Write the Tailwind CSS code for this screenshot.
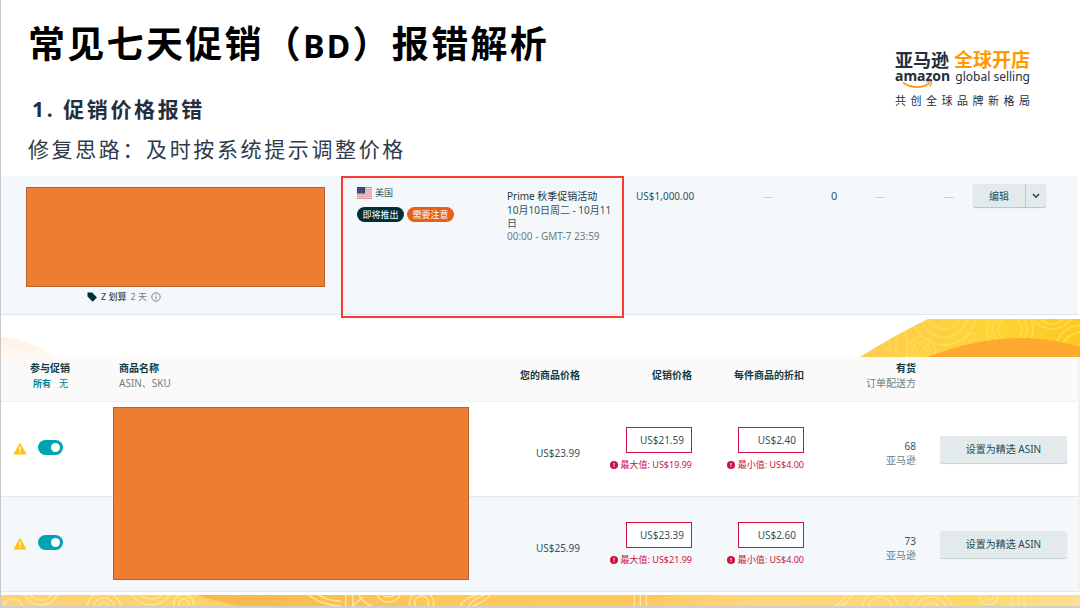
<!DOCTYPE html>
<html lang="zh-CN">
<head>
<meta charset="utf-8">
<meta name="viewport" content="width=device-width, initial-scale=1">
<title>常见七天促销（BD）报错解析</title>
<script src="https://cdn.jsdelivr.net/npm/@tailwindcss/browser@4"></script>
</head>
<body class="bg-white font-['Noto_Sans','Noto_Sans_CJK_SC',sans-serif] text-[10px] leading-[14px] text-[#33535a]">
<svg class="hidden" aria-hidden="true">
  <defs>
    <symbol id="warn" viewBox="0 0 14 13"><path d="M7 .5 13.6 12.5H.4Z" fill="#ffc20e"/><path d="M7 4.5v4M7 9.6v1.4" stroke="#fff" stroke-width="1.4"/></symbol>
    <symbol id="err" viewBox="0 0 8 8"><circle cx="4" cy="4" r="4" fill="#cc1140"/><path d="M4 1.8v2.7M4 5.2v1" stroke="#fff" stroke-width="1"/></symbol>
  </defs>
</svg>
<div class="min-h-screen flex flex-col border-l border-[#c8c8c8]">
  <header class="flex items-start justify-between h-[176px] pl-[27px] pr-[50px]">
    <div class="pt-[20px]">
      <h1 class="text-[37px] leading-[48px] font-bold text-black tracking-[0.0625em]">常见七天促销（<span class="text-[32px] leading-none">BD</span>）报错解析</h1>
      <h2 class="mt-[25px] pl-[4px] text-[21px] leading-[32px] font-bold text-[#232f3e] tracking-[0.125em]">1. 促销价格报错</h2>
      <p class="mt-[8px] text-[21px] leading-[32px] text-[#2f3b49] tracking-[0.125em]">修复思路：及时按系统提示调整价格</p>
    </div>
    <div class="pt-[50px] w-[135px] text-[#232f3e]">
      <div class="flex justify-between text-[18px] leading-[20px] font-bold"><span>亚马逊</span><span class="text-[19px] text-[#ff9900]">全球开店</span></div>
      <div class="-mt-[1px] relative flex justify-between items-baseline text-[12px] leading-[13px] whitespace-nowrap"><b class="text-[14px]">amazon</b><span>global selling</span>
        <svg class="absolute left-[7px] top-[11px]" width="32" height="9" viewBox="0 0 32 9" fill="none" stroke="#ff9900"><path d="M1 2.5C9 8.5 20 8.5 28 3" stroke-width="1.8"/><path d="M24.5 2.2c2-1 4-1 5-.4.3 1.400-.5 3.200-1.800 4.500" stroke-width="1.200"/></svg>
      </div>
      <div class="mt-[10px] flex justify-between text-[11px] leading-[16px]"><span>共</span><span>创</span><span>全</span><span>球</span><span>品</span><span>牌</span><span>新</span><span>格</span><span>局</span></div>
    </div>
  </header>

  <section class="flex items-start h-[139px] bg-[#f5f8fa] border-b border-[#dfe7e8] mr-[2px]">
    <div class="flex-1 pl-[25px] pr-[16px] pt-[11px]">
      <div class="h-[100px] bg-[#ed7d31] border border-[#b8622a]"></div>
      <div class="flex items-center gap-[4px] pl-[61px] pt-[3px] text-[9px]">
        <svg width="10" height="10" viewBox="0 0 10 10"><path d="M.8.5h4.400L9.500 4.900a.8.8 0 0 1 0 1.100L6.300 9.200a.8.8 0 0 1-1.100 0L.5 4.600V.8Z" fill="#002f36"/></svg>
        <span class="font-medium">Z 划算</span><span class="text-[#6c7f82]">2 天</span>
        <svg width="10" height="10" viewBox="0 0 10 10" fill="none" stroke="#6c7f82"><circle cx="5" cy="5" r="4.200" stroke-width=".9"/><path d="M5 4.300v3M5 2.500v1"/></svg>
      </div>
    </div>
    <div class="flex w-[283px] h-[142px] border-2 border-[#fa3a30] pl-[14px] pt-[8px]">
      <div class="w-[150px] text-[9px]">
        <div class="flex items-center gap-[3px]">
          <svg width="15" height="12" viewBox="0 0 15 12"><rect width="15" height="12" fill="#f4e4e6"/><path d="M0 .5h15M0 2.300h15M0 4.100h15M0 6h15M0 7.800h15M0 9.700h15M0 11.500h15" stroke="#d8848d" stroke-width=".9"/><rect width="8" height="6.400" fill="#34416f"/><path d="M1 1.500h6M1 3.200h6M1 4.900h6" stroke="#8089a8" stroke-width=".6" stroke-dasharray=".7 .8"/></svg>
          <span>美国</span>
        </div>
        <div class="flex gap-[3px] mt-[7px] text-white leading-[15px]">
          <span class="rounded-full bg-[#002f36] px-[5px] w-[47px] text-center">即将推出</span><span class="rounded-full bg-[#e8601c] px-[5px] w-[47px] text-center">需要注意</span>
        </div>
      </div>
      <div class="w-[108px] pt-[4px] leading-[13px]">
        <div class="text-[#1f3338]">Prime 秋季促销活动</div>
        <div class="mt-[1px]">10月10日周二 - 10月11日</div>
        <div class="text-[#6c7f82]">00:00 - GMT-7 23:59</div>
      </div>
    </div>
    <div class="w-[122px] pl-[12px] pt-[13px]">US$1,000.00</div>
    <div class="w-[59px] pt-[13px] pl-[17px] text-[#c3d0d2]">—</div>
    <div class="w-[53px] pt-[13px] pl-[26px] text-[11px]">0</div>
    <div class="w-[59px] pt-[13px] pl-[17px] text-[#c3d0d2]">—</div>
    <div class="w-[56px] pt-[13px] pl-[27px] text-[#c3d0d2]">—</div>
    <div class="w-[105px] pt-[8px] flex">
      <div class="flex h-[23px] rounded-[2px] bg-[#e3eaeb] shadow-[0_1px_1px_#b5c3c5]">
        <button class="w-[52px] text-center text-[#1f4a52]">编辑</button>
        <button class="w-[21px] border-l border-[#bccacc] flex items-center justify-center" aria-label="更多"><svg width="8" height="6" viewBox="0 0 8 6" fill="none" stroke="#1f4a52" stroke-width="1.500"><path d="M1 1l3 3.200L7 1"/></svg></button>
      </div>
    </div>
  </section>

  <div class="flex justify-between h-[42px]" aria-hidden="true">
    <svg width="60" height="42" viewBox="0 0 60 42"><defs><linearGradient id="pale" x1="0" y1="0" x2="0" y2="1"><stop offset="0" stop-color="#fff0e2"/><stop offset="1" stop-color="#fff9f3"/></linearGradient></defs><path d="M0 22Q26 24 54 42H0Z" fill="url(#pale)"/></svg>
    <svg width="220" height="42" viewBox="0 0 220 42">
      <defs><linearGradient id="sun" x1="0" x2="1"><stop offset="0" stop-color="#ffcb52"/><stop offset=".6" stop-color="#fdd436"/><stop offset="1" stop-color="#fdc91e"/></linearGradient><clipPath id="hill"><path d="M0 42Q35 20 68 4H220V42Z"/></clipPath></defs>
      <g clip-path="url(#hill)"><rect width="220" height="42" fill="url(#sun)"/>
        <g fill="none" stroke="#ffdc52" stroke-width="1.500"><circle cx="61" cy="36" r="14"/><circle cx="61" cy="36" r="9"/><circle cx="61" cy="36" r="5"/><circle cx="84" cy="-2" r="32"/><circle cx="84" cy="-2" r="24"/><circle cx="84" cy="-2" r="16"/><circle cx="150" cy="14" r="23"/><circle cx="150" cy="14" r="17"/><circle cx="150" cy="14" r="12"/><path d="M103 32c0-10 8-15 16-14M108 32c0-6 4-9 9-8M30 20v20M36 20v20M44 14q6 12 2 28"/><circle cx="222" cy="38" r="28"/><circle cx="222" cy="38" r="21"/><path d="M180 4q12 10 24 0M172 4q20 20 40 0"/></g>
        <path d="M68 42Q150 10 220 32V42Z" fill="#ffa930"/></g>
    </svg>
  </div>

  <div class="border-r-2 border-[#eef2f2]">
  <table class="w-full table-fixed border-collapse">
    <colgroup><col class="w-[112px]"><col><col class="w-[111px]"><col class="w-[112px]"><col class="w-[112px]"><col class="w-[112px]"><col class="w-[162px]"></colgroup>
    <thead>
      <tr class="h-[44px] bg-[#fafafa] border-b border-[#eef1f1] align-top leading-[15px] text-[#123c44]">
        <th class="pt-[4px] pl-[29px] text-left font-bold">参与促销<div class="flex gap-[8px] pl-[3px] text-[9px]"><a href="#" class="text-[#008296]">所有</a><a href="#" class="font-normal text-[#008296]">无</a></div></th>
        <th class="pt-[4px] pl-[6px] text-left font-bold">商品名称<div class="font-normal text-[#6c7f82]">ASIN、SKU</div></th>
        <th class="pt-[11px] text-right font-bold">您的商品价格</th>
        <th class="pt-[11px] text-right font-bold">促销价格</th>
        <th class="pt-[11px] text-right font-bold">每件商品的折扣</th>
        <th class="pt-[4px] text-right font-bold">有货<div class="font-normal text-[#6c7f82]">订单配送方</div></th>
        <td></td>
      </tr>
    </thead>
    <tbody>
      <tr class="h-[95px] bg-white border-b border-[#e3e9ea] align-top">
        <td class="pt-[38px] pl-[12px]"><div class="flex items-center gap-[11px]"><svg class="mt-[2px]" width="14" height="13"><use href="#warn"/></svg><input type="checkbox" role="switch" checked aria-label="参与促销" class="relative appearance-none w-[25px] h-[15px] rounded-full bg-[#00a3b4] before:content-[''] before:absolute before:right-[3px] before:top-[3px] before:size-[9px] before:rounded-full before:bg-white"></div></td>
        <td class="relative"><div class="absolute inset-x-0 top-[5px] h-[173px] bg-[#ed7d31] border border-[#b8622a]"></div></td>
        <td class="pt-[44px] text-right">US$23.99</td>
        <td class="pt-[25px]"><div class="flex flex-col items-end"><input aria-label="促销价格" value="US$21.59" class="w-[66px] h-[26px] bg-white border border-[#cc1140] pr-[7px] text-right"><div class="mt-[5px] flex items-center gap-[3px] text-[9px] text-[#cc1140] whitespace-nowrap"><svg width="8" height="8"><use href="#err"/></svg>最大值: US$19.99</div></div></td>
        <td class="pt-[25px]"><div class="flex flex-col items-end"><input aria-label="每件商品的折扣" value="US$2.40" class="w-[66px] h-[26px] bg-white border border-[#cc1140] pr-[7px] text-right"><div class="mt-[5px] flex items-center gap-[3px] text-[9px] text-[#cc1140] whitespace-nowrap"><svg width="8" height="8"><use href="#err"/></svg>最小值: US$4.00</div></div></td>
        <td class="pt-[37px] text-right">68<div class="text-[#6c7f82]">亚马逊</div></td>
        <td class="pt-[34px] pl-[24px] pr-[11px]"><button class="w-full h-[27px] rounded-[2px] bg-[#e3eaeb] text-[#1f4a52] shadow-[0_1px_1px_#c5d0d2]">设置为精选 ASIN</button></td>
      </tr>
      <tr class="h-[95px] bg-[#f5f8fa] border-b border-[#e3e9ea] align-top">
        <td class="pt-[38px] pl-[12px]"><div class="flex items-center gap-[11px]"><svg class="mt-[2px]" width="14" height="13"><use href="#warn"/></svg><input type="checkbox" role="switch" checked aria-label="参与促销" class="relative appearance-none w-[25px] h-[15px] rounded-full bg-[#00a3b4] before:content-[''] before:absolute before:right-[3px] before:top-[3px] before:size-[9px] before:rounded-full before:bg-white"></div></td>
        <td></td>
        <td class="pt-[44px] text-right">US$25.99</td>
        <td class="pt-[25px]"><div class="flex flex-col items-end"><input aria-label="促销价格" value="US$23.39" class="w-[66px] h-[26px] bg-white border border-[#cc1140] pr-[7px] text-right"><div class="mt-[5px] flex items-center gap-[3px] text-[9px] text-[#cc1140] whitespace-nowrap"><svg width="8" height="8"><use href="#err"/></svg>最大值: US$21.99</div></div></td>
        <td class="pt-[25px]"><div class="flex flex-col items-end"><input aria-label="每件商品的折扣" value="US$2.60" class="w-[66px] h-[26px] bg-white border border-[#cc1140] pr-[7px] text-right"><div class="mt-[5px] flex items-center gap-[3px] text-[9px] text-[#cc1140] whitespace-nowrap"><svg width="8" height="8"><use href="#err"/></svg>最小值: US$4.00</div></div></td>
        <td class="pt-[37px] text-right">73<div class="text-[#6c7f82]">亚马逊</div></td>
        <td class="pt-[34px] pl-[24px] pr-[11px]"><button class="w-full h-[27px] rounded-[2px] bg-[#e3eaeb] text-[#1f4a52] shadow-[0_1px_1px_#c5d0d2]">设置为精选 ASIN</button></td>
      </tr>
    </tbody>
  </table>
  </div>

  <div class="mt-[3px] h-[13px] border-b-2 border-[#cfcfcf]" aria-hidden="true">
    <svg class="block w-full h-[11px]" viewBox="0 0 1080 11" preserveAspectRatio="none">
      <defs><linearGradient id="band"><stop offset="0" stop-color="#ffcf7a"/><stop offset=".17" stop-color="#ffd365"/><stop offset=".4" stop-color="#ffc65a"/><stop offset=".6" stop-color="#ffcb60"/><stop offset=".7" stop-color="#ffd67c"/><stop offset=".9" stop-color="#ffd868"/><stop offset="1" stop-color="#ffdf94"/></linearGradient><linearGradient id="wave"><stop offset="0" stop-color="#f9b54a"/><stop offset="1" stop-color="#ffc65a"/></linearGradient></defs>
      <rect width="1080" height="11" fill="url(#band)"/>
      <path d="M195 0Q225 9 240 11H430L400 0Z" fill="url(#wave)"/><path d="M625 11Q645 3 680 0H560V11Z" fill="#ffc65a"/>
      <g fill="none" stroke="#ffe796" stroke-width="1.500"><circle cx="40" cy="-8" r="18"/><circle cx="40" cy="-8" r="13"/><circle cx="12" cy="14" r="10"/><circle cx="103" cy="14" r="17"/><circle cx="103" cy="14" r="11"/><circle cx="103" cy="14" r="6"/><circle cx="150" cy="-12" r="22"/><circle cx="150" cy="-12" r="16"/><circle cx="183" cy="9" r="10"/><circle cx="183" cy="9" r="5"/><path d="M308 0q12 10 32 11M318 0q8 6 22 6M345 0v11M352 0v11l10-9M358 0q6 9 14 11"/><circle cx="388" cy="-6" r="13"/><circle cx="388" cy="-6" r="8"/><circle cx="421" cy="8" r="12"/><circle cx="421" cy="8" r="7"/><path d="M460 11q2-7 16-11M468 11q4-7 16-11M490 0q-8 8-18 11"/></g>
      <g fill="none" stroke="#ffe9a8" stroke-width="1.200"><path d="M634 0v11M640 0v11M646 0v11M846 0q-4 8-12 11M852 0q-4 8-12 11"/><circle cx="880" cy="14" r="18"/><circle cx="880" cy="14" r="12"/><circle cx="931" cy="18" r="22"/><circle cx="931" cy="18" r="16"/><circle cx="931" cy="18" r="10"/><circle cx="989" cy="1" r="9"/><circle cx="989" cy="1" r="4"/><path d="M1012 0v11M1018 0v11M1024 0v11"/></g>
    </svg>
  </div>
</div>
</body>
</html>
